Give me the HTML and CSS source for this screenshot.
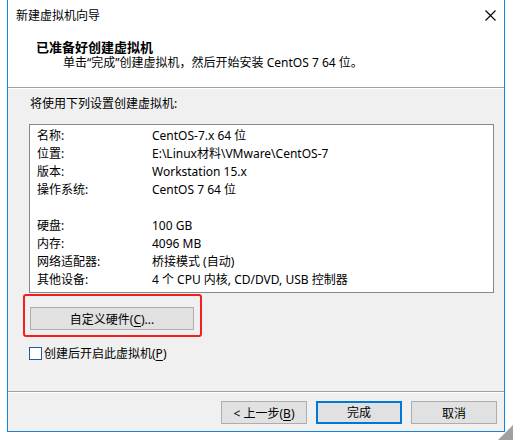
FILE: index.html
```html
<!DOCTYPE html>
<html lang="zh-CN">
<head>
<meta charset="utf-8">
<title>新建虚拟机向导</title>
<link rel="stylesheet" href="styles.css">
</head>
<body>
<div class="window">
  <div class="titlebar">
    <span class="title">新建虚拟机向导</span>
    <svg class="close" width="11" height="11" viewBox="0 0 11 11"><path d="M0.5 0.5 L10.5 10.5 M10.5 0.5 L0.5 10.5" stroke="#000" stroke-width="1.1" fill="none"/></svg>
  </div>
  <div class="header">
    <div class="heading">已准备好创建虚拟机</div>
    <div class="subtitle">单击“完成”创建虚拟机，然后开始安装 CentOS 7 64 位。</div>
  </div>
  <div class="content">
    <div class="intro">将使用下列设置创建虚拟机:</div>
    <div class="listbox">
      <span>名称:</span><span>CentOS-7.x 64 位</span>
      <span>位置:</span><span>E:\Linux材料\VMware\CentOS-7</span>
      <span>版本:</span><span>Workstation 15.x</span>
      <span>操作系统:</span><span>CentOS 7 64 位</span>
      <span class="blank"></span>
      <span>硬盘:</span><span>100 GB</span>
      <span>内存:</span><span>4096 MB</span>
      <span>网络适配器:</span><span>桥接模式 (自动)</span>
      <span>其他设备:</span><span>4 个 CPU 内核, CD/DVD, USB 控制器</span>
    </div>
    <div class="custom-wrap">
      <button class="btn custom">自定义硬件(<u>C</u>)...</button>
      <span class="highlight"></span>
    </div>
    <label class="check-row"><span class="checkbox"></span><span class="check-label">创建后开启此虚拟机(<u>P</u>)</span></label>
  </div>
  <div class="footer">
    <button class="btn">&lt; 上一步(<u>B</u>)</button>
    <button class="btn primary">完成</button>
    <button class="btn">取消</button>
  </div>
</div>
<div class="grip"></div>
</body>
</html>
```

FILE: styles.css
```css
html, body {
  margin: 0;
  padding: 0;
}
body {
  width: 513px;
  height: 440px;
  overflow: hidden;
  background: #fff;
  position: relative;
  font-family: "Noto Sans", "Noto Sans CJK SC", sans-serif;
  font-size: 12px;
  color: #000;
}
.window {
  margin-left: 7px;
  width: 496px;
  border: 1px solid #1883d7;
  border-top: none;
  background: #fff;
}
.titlebar {
  height: 30px;
  display: flex;
  align-items: center;
  justify-content: space-between;
  padding: 1px 8px 0 8px;
  box-sizing: border-box;
}
.title {
  line-height: 16px;
}
.close {
  display: block;
  margin-top: -1px;
}
.header {
  height: 58px;
  box-sizing: border-box;
  padding: 9px 0 0 28px;
  border-bottom: 1px solid #a0a0a0;
}
.heading {
  font-weight: bold;
  font-size: 13px;
  line-height: 16px;
}
.subtitle {
  line-height: 16px;
  padding-left: 27px;
}
.content {
  border-top: 1px solid #fff;
  background: #f0f0f0;
  height: 303px;
  padding: 7px 0 0 0;
  box-sizing: border-box;
}
.intro {
  line-height: 16px;
  padding-left: 22px;
}
.listbox {
  margin: 12px 10px 0 21px;
  border: 1px solid #828790;
  background: #fff;
  padding: 2px 0 3px 7px;
  display: grid;
  grid-template-columns: 115px 1fr;
  line-height: 18px;
  height: 169px;
  box-sizing: border-box;
}
.listbox .blank {
  grid-column: 1 / 3;
  height: 18px;
}
.custom-wrap {
  position: relative;
  margin: 14px 0 0 22px;
  width: 164px;
  height: 23px;
}
.btn {
  font-family: inherit;
  font-size: 12px;
  color: #000;
  background: #e1e1e1;
  border: 1px solid #adadad;
  height: 23px;
  padding: 2px 0 0 0;
  margin: 0;
  line-height: 18px;
  box-sizing: border-box;
  display: block;
}
.btn u {
  text-underline-offset: 2px;
}
.custom {
  width: 164px;
}
.highlight {
  position: absolute;
  left: -7px;
  top: -13px;
  width: 179px;
  height: 43px;
  box-sizing: border-box;
  border: 2px solid #f2201c;
  border-radius: 3px;
}
.check-row {
  display: flex;
  align-items: center;
  margin: 17px 0 0 21px;
  height: 13px;
}
.checkbox {
  width: 13px;
  height: 13px;
  box-sizing: border-box;
  border: 1px solid #245b9c;
  background: #fff;
}
.check-label {
  margin-left: 2px;
  line-height: 16px;
}
.check-label u {
  text-underline-offset: 2px;
}
.footer {
  border-top: 1px solid #a0a0a0;
  box-shadow: inset 0 1px 0 #fff;
  background: #f0f0f0;
  height: 40px;
  box-sizing: border-box;
  padding: 9px 7px 0 0;
  display: flex;
  justify-content: flex-end;
  gap: 9px;
}
.footer .btn {
  width: 86px;
}
.footer .primary {
  border: 2px solid #0078d7;
  padding-top: 1px;
}
.grip {
  position: absolute;
  right: 0;
  bottom: 0;
  width: 0;
  height: 0;
  border-style: solid;
  border-width: 0 0 15px 15px;
  border-color: transparent transparent #a0a0a0 transparent;
}
```
